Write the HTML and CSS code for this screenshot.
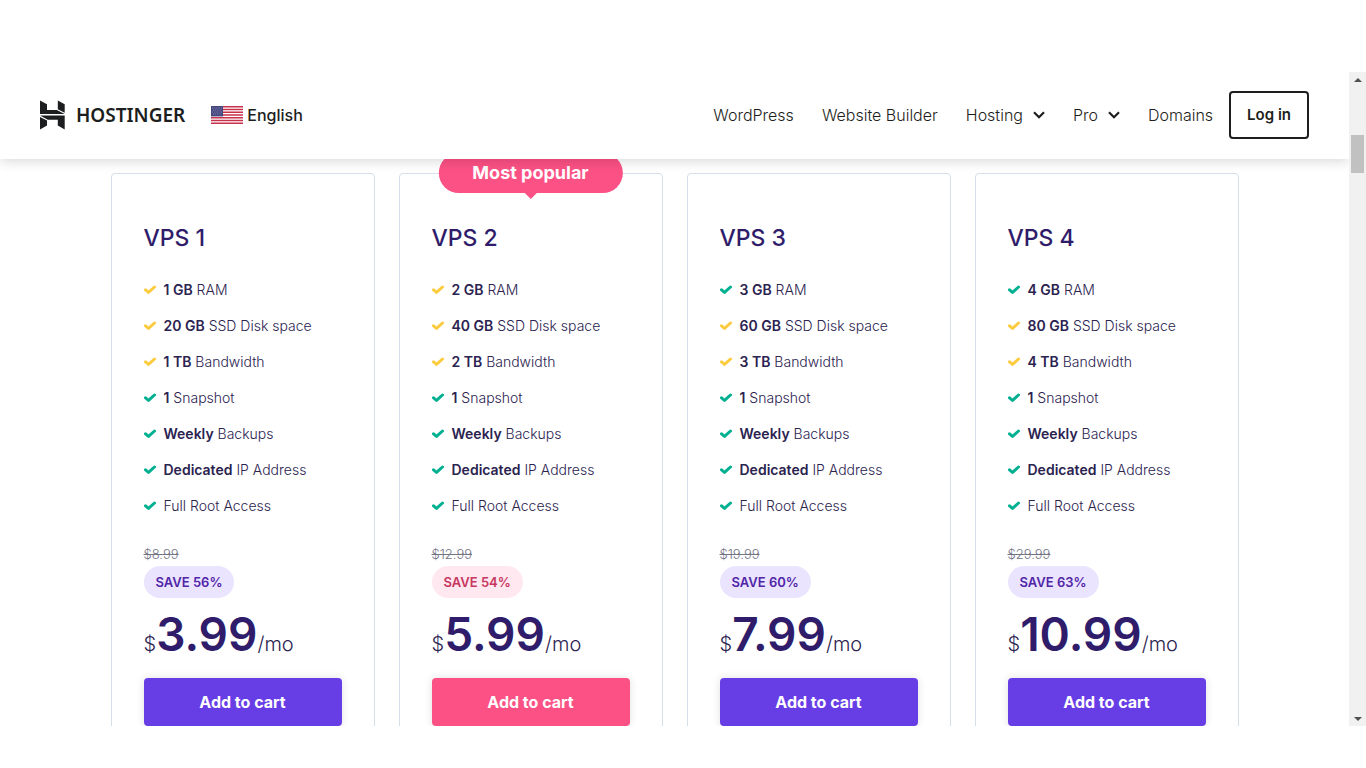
FILE: index.html
```html
<!DOCTYPE html>
<html lang="en">
<head>
    <meta charset="UTF-8">
    <meta name="viewport" content="width=device-width, initial-scale=1.0">
    <title>VPS Hosting | Hostinger</title>
    <link rel="stylesheet" href="styles.css">
</head>
<body>

<svg class="sprite" aria-hidden="true">
    <symbol id="check" viewBox="0 0 12 10">
        <path d="M1.500 4.800 4.500 7.400 10.500 2" fill="none" stroke="currentColor" stroke-width="3" stroke-linecap="round" stroke-linejoin="round"/>
    </symbol>
    <symbol id="chevron" viewBox="0 0 12 8">
        <path d="M1 1.2 6 6.2 11 1.2" fill="none" stroke="currentColor" stroke-width="2.2"/>
    </symbol>
</svg>

<div class="window">
    <div class="page">
        <header class="header">
            <a class="logo" href="#">
                <svg width="25" height="30" viewBox="0 0 25 30" aria-hidden="true">
                    <path d="M0 .5 7 4.300V10H16.800L24.700 14H0Z"/>
                    <path d="M17.800 .5 24.700 4.300V12.800L17.800 9.200Z"/>
                    <path d="M0 15.600H24.700V29.500L17.800 25.600V19.800H7.800Z"/>
                    <path d="M0 17 7 20.600V25.600L0 29.500Z"/>
                </svg>
                <span>HOSTINGER</span>
            </a>
            <button class="language" type="button">
                <svg width="32" height="18" viewBox="0 0 32 18" aria-hidden="true">
                    <path fill="#fff" d="M0 0h32v18H0z"/>
                    <path stroke="#c8314b" stroke-width="1.4" d="M0 .7h32M0 3.460h32M0 6.230h32M0 9h32M0 11.770h32M0 14.540h32M0 17.300h32"/>
                    <path fill="#46467f" d="M0 0h12v10.400H0z"/>
                    <path stroke="#9c9cc0" stroke-width=".8" stroke-dasharray="1 1.200" d="M1 2h10M2 4h9M1 6h10M2 8h9"/>
                </svg>
                English
            </button>
            <nav class="nav">
                <a href="#">WordPress</a>
                <a href="#">Website Builder</a>
                <a href="#">Hosting <svg class="chevron"><use href="#chevron"/></svg></a>
                <a href="#">Pro <svg class="chevron"><use href="#chevron"/></svg></a>
                <a href="#">Domains</a>
            </nav>
            <a class="login" href="#">Log in</a>
        </header>

        <main class="plans">
            <section class="plan">
                <h2>VPS 1</h2>
                <ul>
                    <li><svg class="check yellow"><use href="#check"/></svg><span><b>1 GB</b> RAM</span></li>
                    <li><svg class="check yellow"><use href="#check"/></svg><span><b>20 GB</b> SSD Disk space</span></li>
                    <li><svg class="check yellow"><use href="#check"/></svg><span><b>1 TB</b> Bandwidth</span></li>
                    <li><svg class="check"><use href="#check"/></svg><span><b>1</b> Snapshot</span></li>
                    <li><svg class="check"><use href="#check"/></svg><span><b>Weekly</b> Backups</span></li>
                    <li><svg class="check"><use href="#check"/></svg><span><b>Dedicated</b> IP Address</span></li>
                    <li><svg class="check"><use href="#check"/></svg><span>Full Root Access</span></li>
                </ul>
                <s class="old-price">$8.99</s>
                <span class="save">SAVE 56%</span>
                <p class="price">$<strong>3.99</strong>/mo</p>
                <button class="cart" type="button">Add to cart</button>
            </section>

            <section class="plan popular">
                <div class="badge">Most popular</div>
                <h2>VPS 2</h2>
                <ul>
                    <li><svg class="check yellow"><use href="#check"/></svg><span><b>2 GB</b> RAM</span></li>
                    <li><svg class="check yellow"><use href="#check"/></svg><span><b>40 GB</b> SSD Disk space</span></li>
                    <li><svg class="check yellow"><use href="#check"/></svg><span><b>2 TB</b> Bandwidth</span></li>
                    <li><svg class="check"><use href="#check"/></svg><span><b>1</b> Snapshot</span></li>
                    <li><svg class="check"><use href="#check"/></svg><span><b>Weekly</b> Backups</span></li>
                    <li><svg class="check"><use href="#check"/></svg><span><b>Dedicated</b> IP Address</span></li>
                    <li><svg class="check"><use href="#check"/></svg><span>Full Root Access</span></li>
                </ul>
                <s class="old-price">$12.99</s>
                <span class="save">SAVE 54%</span>
                <p class="price">$<strong>5.99</strong>/mo</p>
                <button class="cart" type="button">Add to cart</button>
            </section>

            <section class="plan">
                <h2>VPS 3</h2>
                <ul>
                    <li><svg class="check"><use href="#check"/></svg><span><b>3 GB</b> RAM</span></li>
                    <li><svg class="check yellow"><use href="#check"/></svg><span><b>60 GB</b> SSD Disk space</span></li>
                    <li><svg class="check yellow"><use href="#check"/></svg><span><b>3 TB</b> Bandwidth</span></li>
                    <li><svg class="check"><use href="#check"/></svg><span><b>1</b> Snapshot</span></li>
                    <li><svg class="check"><use href="#check"/></svg><span><b>Weekly</b> Backups</span></li>
                    <li><svg class="check"><use href="#check"/></svg><span><b>Dedicated</b> IP Address</span></li>
                    <li><svg class="check"><use href="#check"/></svg><span>Full Root Access</span></li>
                </ul>
                <s class="old-price">$19.99</s>
                <span class="save">SAVE 60%</span>
                <p class="price">$<strong>7.99</strong>/mo</p>
                <button class="cart" type="button">Add to cart</button>
            </section>

            <section class="plan">
                <h2>VPS 4</h2>
                <ul>
                    <li><svg class="check"><use href="#check"/></svg><span><b>4 GB</b> RAM</span></li>
                    <li><svg class="check yellow"><use href="#check"/></svg><span><b>80 GB</b> SSD Disk space</span></li>
                    <li><svg class="check yellow"><use href="#check"/></svg><span><b>4 TB</b> Bandwidth</span></li>
                    <li><svg class="check"><use href="#check"/></svg><span><b>1</b> Snapshot</span></li>
                    <li><svg class="check"><use href="#check"/></svg><span><b>Weekly</b> Backups</span></li>
                    <li><svg class="check"><use href="#check"/></svg><span><b>Dedicated</b> IP Address</span></li>
                    <li><svg class="check"><use href="#check"/></svg><span>Full Root Access</span></li>
                </ul>
                <s class="old-price">$29.99</s>
                <span class="save">SAVE 63%</span>
                <p class="price">$<strong>10.99</strong>/mo</p>
                <button class="cart" type="button">Add to cart</button>
            </section>
        </main>
    </div>

    <div class="scrollbar" aria-hidden="true">
        <svg width="8" height="4" viewBox="0 0 8 4"><path d="M0 4 4 0 8 4z"/></svg>
        <div class="track"><div class="thumb"></div></div>
        <svg width="8" height="4" viewBox="0 0 8 4"><path d="M0 0 4 4 8 0z"/></svg>
    </div>
</div>

</body>
</html>
```
FILE: styles.css
```css
* {
    box-sizing: border-box;
}
body {
    margin: 0;
    background: #fff;
    color: #2b2350;
    font-family: Inter, "Open Sans", sans-serif;
}
a {
    color: inherit;
    text-decoration: none;
}
button {
    font: inherit;
    border: none;
    cursor: pointer;
}
.sprite {
    position: absolute;
    width: 0;
    height: 0;
}
.window {
    display: flex;
    height: 100vh;
    padding: 72px 0 42px;
}
.page {
    flex: 1;
    min-width: 0;
    overflow: hidden;
}

/* header */
.header {
    position: relative;
    z-index: 2;
    display: flex;
    align-items: center;
    padding: 19px 40px 20px;
    background: #fff;
    box-shadow: 0 2px 12px rgba(0, 0, 0, 0.16);
    color: #1d1e20;
}
.logo {
    display: flex;
    align-items: center;
    gap: 11px;
    fill: #1d1e20;
    font-family: "Noto Sans", sans-serif;
    font-size: 19px;
    font-weight: 600;
    line-height: 24px;
}
.language {
    display: flex;
    align-items: center;
    gap: 4px;
    margin-left: 26px;
    padding: 0;
    background: none;
    color: #1d1e20;
    font-size: 16px;
    font-weight: 500;
    line-height: 24px;
}
.nav {
    display: flex;
    gap: 28px;
    margin-left: auto;
    font-size: 16px;
    font-weight: 300;
    line-height: 24px;
}
.nav a {
    display: flex;
    align-items: center;
    gap: 10px;
}
.chevron {
    width: 12px;
    height: 8px;
}
.login {
    margin-left: 16px;
    padding: 10px 16px;
    border: 2px solid #1d1e20;
    border-radius: 4px;
    font-size: 15px;
    font-weight: 600;
    line-height: 24px;
}

/* plans */
.plans {
    display: grid;
    grid-template-columns: repeat(4, 1fr);
    gap: 24px;
    max-width: 1128px;
    margin: 14px auto 0;
}
.plan {
    position: relative;
    padding: 48px 32px 32px;
    border: 1px solid #d5dfec;
    border-radius: 4px;
}
.plan h2 {
    margin: 0 0 18px;
    color: #2f1c6a;
    font-size: 23px;
    font-weight: 500;
    line-height: 32px;
}
.plan ul {
    margin: 0 0 18px;
    padding: 0;
    list-style: none;
}
.plan li {
    display: flex;
    align-items: center;
    gap: 8px;
    font-size: 14px;
    font-weight: 300;
    line-height: 36px;
}
.plan b {
    font-weight: 600;
}
.check {
    width: 12px;
    height: 10px;
    color: #00b090;
}
.check.yellow {
    color: #fccb3f;
}
.old-price {
    display: block;
    color: #727586;
    font-size: 13px;
    font-weight: 300;
    line-height: 24px;
}
.save {
    display: inline-block;
    padding: 0 12px;
    border-radius: 16px;
    background: #ebe4ff;
    color: #5025a8;
    font-size: 13px;
    font-weight: 600;
    line-height: 32px;
    vertical-align: top;
}
.price {
    margin: 8px 0 6px;
    font-size: 20px;
    font-weight: 300;
    line-height: 56px;
}
.price strong {
    color: #2f1c6a;
    font-size: 46px;
    font-weight: 600;
}
.cart {
    width: 100%;
    padding: 0;
    border-radius: 4px;
    background: #673de6;
    box-shadow: 0 0 8px rgba(0, 0, 0, 0.12);
    color: #fff;
    font-size: 16px;
    font-weight: 700;
    line-height: 48px;
}
.badge {
    position: absolute;
    top: -21px;
    left: 50%;
    padding: 0 34px;
    border-radius: 20px;
    background: #fc5185;
    color: #fff;
    font-size: 18px;
    font-weight: 700;
    line-height: 40px;
    white-space: nowrap;
    transform: translateX(-50%);
}
.badge::after {
    content: "";
    position: absolute;
    top: 100%;
    left: 50%;
    margin-left: -6px;
    border: 6px solid transparent;
    border-top-color: #fc5185;
    border-bottom: none;
}
.popular .save {
    background: #ffe8ef;
    color: #c7365f;
}
.popular .cart {
    background: #fc5185;
}

/* scrollbar */
.scrollbar {
    display: flex;
    flex-direction: column;
    align-items: center;
    width: 17px;
    padding: 6px 0 5px;
    background: #f1f1f1;
    fill: #505050;
}
.track {
    flex: 1;
    padding-top: 53px;
}
.thumb {
    width: 13px;
    height: 38px;
    background: #c1c1c1;
}
```
